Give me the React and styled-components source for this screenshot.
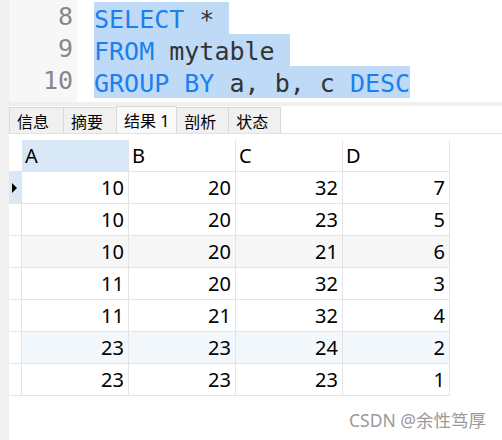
import React from 'react';
import styled, { createGlobalStyle } from 'styled-components';

const GlobalStyle = createGlobalStyle`
  html, body {
    margin: 0;
    padding: 0;
    background: #ffffff;
  }
  body {
    font-family: "Noto Sans", "Noto Sans CJK SC", sans-serif;
  }
`;

const lines = [
  { no: 8, parts: [['kw', 'SELECT'], ['tx', ' * ']] },
  { no: 9, parts: [['kw', 'FROM'], ['tx', ' mytable ']] },
  { no: 10, parts: [['kw', 'GROUP BY'], ['tx', ' a, b, c '], ['kw', 'DESC']] },
];

const tabs = ['信息', '摘要', '结果 1', '剖析', '状态'];
const columns = ['A', 'B', 'C', 'D'];
const rows = [
  [10, 20, 32, 7],
  [10, 20, 23, 5],
  [10, 20, 21, 6],
  [11, 20, 32, 3],
  [11, 21, 32, 4],
  [23, 23, 24, 2],
  [23, 23, 23, 1],
];

const Page = styled.div`
  position: relative;
  display: flex;
  width: 502px;
  height: 440px;
  overflow: hidden;
`;

const Strip = styled.div`
  width: 9px;
  flex: none;
  background: #f0f0f0;
`;

const Main = styled.div`
  flex: 1;
  display: flex;
  flex-direction: column;
`;

const Editor = styled.div`
  display: flex;
  height: 102px;
`;

const Gutter = styled.div`
  width: 68px;
  background: #f7f7f7;
  padding-top: 2px;
  box-sizing: border-box;
`;

const LineNo = styled.div`
  height: 32px;
  line-height: 35px;
  padding-right: 4px;
  text-align: right;
  font: 25px "DejaVu Sans Mono", monospace;
  color: #888888;
  overflow: hidden;
`;

const Code = styled.div`
  flex: 1;
  padding: 2px 0 0 17px;
`;

const CodeLine = styled.div`
  height: 32px;
  font: 25px "DejaVu Sans Mono", monospace;
  white-space: pre;
`;

const Selected = styled.span`
  display: inline-block;
  height: 32px;
  line-height: 35px;
  overflow: hidden;
  vertical-align: top;
  background: #bfdaf6;
`;

const Token = styled.span`
  color: ${(p) => (p.$kind === 'kw' ? '#1c7ff0' : '#333333')};
`;

const Divider = styled.div`
  height: 4px;
  background: #efefef;
`;

const TabBar = styled.div`
  display: flex;
  align-items: flex-end;
  height: 27px;
  padding-left: 1px;
  border-bottom: 1px solid #e2e2e2;
`;

const Tab = styled.div`
  height: ${(p) => (p.$active ? '27px' : '26px')};
  box-sizing: border-box;
  padding: 0 7px;
  margin-left: -1px;
  display: flex;
  align-items: center;
  font-size: 16px;
  color: #000;
  background: ${(p) => (p.$active ? '#f9f9f9' : '#f0f0f0')};
  border: 1px solid #d9d9d9;
  border-bottom: none;
  position: ${(p) => (p.$active ? 'relative' : 'static')};
  z-index: ${(p) => (p.$active ? 1 : 0)};
  min-width: ${(p) => p.$w}px;
`;

const Table = styled.div`
  margin-top: 6px;
  display: grid;
  grid-template-columns: 13px repeat(4, 107px);
  width: 441px;
`;

const HeadCell = styled.div`
  height: 32px;
  box-sizing: border-box;
  padding-left: 3px;
  display: flex;
  align-items: center;
  font-size: 20px;
  color: #000;
  background: ${(p) => (p.$selected ? '#d8e8f7' : '#ffffff')};
  border-bottom: 1px solid #e4e4e4;
  border-right: ${(p) => (p.$first ? 'none' : '1px solid #e4e4e4')};
`;

const Indicator = styled.div`
  height: 32px;
  box-sizing: border-box;
  display: flex;
  align-items: center;
  padding-left: 3px;
  background: ${(p) => (p.$current ? '#d8e8f7' : '#ffffff')};
  border-bottom: 1px solid #e4e4e4;
  border-right: 1px solid #e4e4e4;
`;

const Arrow = styled.span`
  width: 0;
  height: 0;
  border-top: 5px solid transparent;
  border-bottom: 5px solid transparent;
  border-left: 5px solid #000;
`;

const Cell = styled.div`
  height: 32px;
  box-sizing: border-box;
  padding-right: 4px;
  display: flex;
  align-items: center;
  justify-content: flex-end;
  font-size: 20px;
  color: #000;
  background: ${(p) => p.$bg};
  border-bottom: 1px solid #e4e4e4;
  border-right: 1px solid #e4e4e4;
`;

const Watermark = styled.div`
  position: absolute;
  right: 16px;
  bottom: 8px;
  font-size: 17.5px;
  color: #9a9a9a;
  text-shadow: 0 0 2px #ffffff;
`;

const rowBg = (i) => (i === 2 ? '#f7f7f7' : i === 5 ? '#f3f8fd' : '#ffffff');
const tabWidths = [55, 54, 59, 53, 53];

export default function App() {
  return (
    <>
      <GlobalStyle />
      <Page>
        <Strip />
        <Main>
          <Editor>
            <Gutter>
              {lines.map((l) => (
                <LineNo key={l.no}>{l.no}</LineNo>
              ))}
            </Gutter>
            <Code>
              {lines.map((l) => (
                <CodeLine key={l.no}>
                  <Selected>
                    {l.parts.map(([kind, text], i) => (
                      <Token key={i} $kind={kind}>{text}</Token>
                    ))}
                  </Selected>
                </CodeLine>
              ))}
            </Code>
          </Editor>
          <Divider />
          <TabBar>
            {tabs.map((t, i) => (
              <Tab key={t} $active={i === 2} $w={tabWidths[i]}>{t}</Tab>
            ))}
          </TabBar>
          <Table>
            <HeadCell $first />
            {columns.map((c, i) => (
              <HeadCell key={c} $selected={i === 0}>{c}</HeadCell>
            ))}
            {rows.map((r, i) => (
              <React.Fragment key={i}>
                <Indicator $current={i === 0}>{i === 0 && <Arrow />}</Indicator>
                {r.map((v, j) => (
                  <Cell key={j} $bg={rowBg(i)}>{v}</Cell>
                ))}
              </React.Fragment>
            ))}
          </Table>
        </Main>
        <Watermark>CSDN @余性笃厚</Watermark>
      </Page>
    </>
  );
}
